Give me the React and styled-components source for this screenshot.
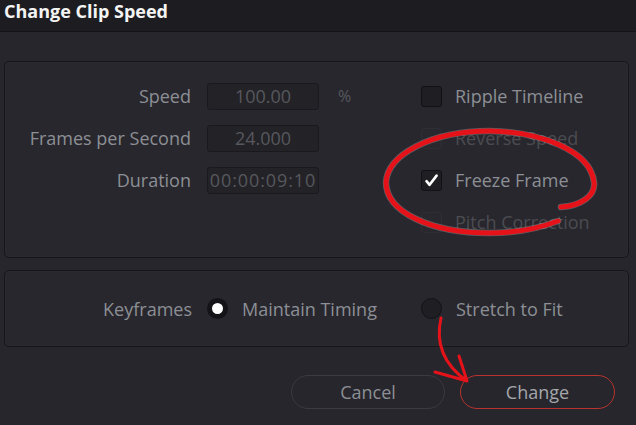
import styled, { createGlobalStyle } from "styled-components";

const GlobalStyle = createGlobalStyle`
  html, body {
    margin: 0;
    padding: 0;
    background: #27262c;
  }

  body {
    font-family: "Open Sans", "Noto Sans", sans-serif;
  }
`;

const StyledDialog = styled.div`
  position: relative;
  width: 636px;
  height: 425px;
  overflow: hidden;

  display: flex;
  flex-direction: column;

  background-color: #27262c;
`;

const StyledTitleBar = styled.div`
  height: 31px;
  padding-left: 4px;

  border-bottom: 1px solid #141317;
  background-color: #1d1c21;

  color: #f4f4f4;
  font-size: 18px;
  font-weight: 700;
  line-height: 23px;
`;

const StyledBody = styled.div`
  padding: 29px 7px 0 4px;

  display: flex;
  flex-direction: column;
  gap: 12px;
`;

const StyledPanel = styled.div`
  height: ${({ $height }) => $height}px;
  box-sizing: border-box;

  display: flex;
  align-items: ${({ $center }) => ($center ? "center" : "flex-start")};

  border: 1px solid #161519;
  border-radius: 5px;
  background-color: #28272d;
  box-shadow: inset 0 0 0 1px #2b2a30;
`;

const StyledFields = styled.div`
  padding-top: 13px;
  width: 416px;

  display: grid;
  grid-template-columns: 186px 112px auto;
  grid-auto-rows: 42px;
  column-gap: 16px;
  align-items: center;
`;

const StyledLabel = styled.div`
  text-align: right;

  color: #8c8f95;
  font-size: 18px;
  white-space: nowrap;
`;

const StyledInput = styled.div`
  height: 27px;
  box-sizing: border-box;
  overflow: hidden;

  display: flex;
  align-items: center;
  justify-content: center;

  border: 1px solid #1a191d;
  border-radius: 3px;
  background-color: #232227;

  color: #56585d;
  font-size: 18px;
  letter-spacing: ${({ $wide }) => ($wide ? "0.9px" : "0")};
`;

const StyledUnit = styled.div`
  padding-left: 3px;

  color: #56585d;
  font-size: 16px;
`;

const StyledOptions = styled.div`
  padding-top: 13px;

  display: grid;
  grid-auto-rows: 42px;
  align-items: center;
`;

const StyledOption = styled.div`
  display: flex;
  align-items: center;
  gap: 13px;

  color: ${({ $disabled }) => ($disabled ? "#4b4c51" : "#8c8f95")};
  font-size: 18px;
  white-space: nowrap;
`;

const StyledCheckbox = styled.div`
  width: 21px;
  height: 21px;
  box-sizing: border-box;

  display: flex;
  align-items: center;
  justify-content: center;

  border: 1px solid ${({ $disabled }) => ($disabled ? "#2f2e34" : "#121115")};
  border-radius: 3px;
  background-color: ${({ $disabled }) => ($disabled ? "#29282e" : "#1f1e22")};
`;

const StyledKeyframes = styled.div`
  width: 100%;

  display: flex;
  align-items: center;
`;

const StyledKeyLabel = styled(StyledLabel)`
  width: 187px;
  margin-right: 15px;
`;

const StyledRadioOption = styled.div`
  width: ${({ $width }) => $width}px;

  display: flex;
  align-items: center;
  gap: 14px;

  color: #8c8f95;
  font-size: 18px;
  white-space: nowrap;
`;

const StyledRadio = styled.div`
  width: 21px;
  height: 21px;
  box-sizing: border-box;
  flex-shrink: 0;

  border: ${({ $checked }) => ($checked ? "5px solid #141317" : "1px solid #121115")};
  border-radius: 50%;
  background-color: ${({ $checked }) => ($checked ? "#ffffff" : "#1f1e22")};
`;

const StyledButtons = styled.div`
  margin-top: 16px;
  padding-right: 14px;

  display: flex;
  justify-content: flex-end;
  gap: 15px;
`;

const StyledButton = styled.div`
  width: ${({ $primary }) => ($primary ? 155 : 154)}px;
  height: 34px;
  box-sizing: border-box;

  display: flex;
  align-items: center;
  justify-content: center;

  border: 1.5px solid ${({ $primary }) => ($primary ? "#b9332f" : "#3a3a40")};
  border-radius: 17px;

  color: ${({ $primary }) => ($primary ? "#a4a7ac" : "#8c8f95")};
  font-size: 18px;
`;

const StyledMarks = styled.svg`
  position: absolute;
  inset: 0;
  pointer-events: none;
`;

const fields = [
  { label: "Speed", value: "100.00", unit: "%" },
  { label: "Frames per Second", value: "24.000" },
  { label: "Duration", value: "00:00:09:10", wide: true },
];

const options = [
  { label: "Ripple Timeline" },
  { label: "Reverse Speed", disabled: true },
  { label: "Freeze Frame", checked: true },
  { label: "Pitch Correction", disabled: true },
];

const circlePath =
  "M561 207 C580 206 596 196 594 182 C590 150 540 132 490 131 C430 131 388 155 386 182 C386 212 430 233 490 233 C520 233 545 226 558 221";

const Check = () => (
  <svg width="15" height="15" viewBox="0 0 15 15">
    <path
      d="M2.5 8.2 L5.6 11.8 L12.6 2.6"
      fill="none"
      stroke="#ffffff"
      strokeWidth="2.6"
      strokeLinecap="round"
      strokeLinejoin="round"
    />
  </svg>
);

const App = () => (
  <StyledDialog>
    <GlobalStyle />
    <StyledTitleBar>Change Clip Speed</StyledTitleBar>

    <StyledBody>
      <StyledPanel $height={197}>
        <StyledFields>
          {fields.map((field) => [
            <StyledLabel key={`${field.label}-label`}>{field.label}</StyledLabel>,
            <StyledInput key={`${field.label}-input`} $wide={field.wide}>
              {field.value}
            </StyledInput>,
            <StyledUnit key={`${field.label}-unit`}>{field.unit}</StyledUnit>,
          ])}
        </StyledFields>

        <StyledOptions>
          {options.map((option) => (
            <StyledOption key={option.label} $disabled={option.disabled}>
              <StyledCheckbox $disabled={option.disabled}>
                {option.checked && <Check />}
              </StyledCheckbox>
              {option.label}
            </StyledOption>
          ))}
        </StyledOptions>
      </StyledPanel>

      <StyledPanel $height={77} $center>
        <StyledKeyframes>
          <StyledKeyLabel>Keyframes</StyledKeyLabel>
          <StyledRadioOption $width={214}>
            <StyledRadio $checked />
            Maintain Timing
          </StyledRadioOption>
          <StyledRadioOption>
            <StyledRadio />
            Stretch to Fit
          </StyledRadioOption>
        </StyledKeyframes>
      </StyledPanel>

      <StyledButtons>
        <StyledButton>Cancel</StyledButton>
        <StyledButton $primary>Change</StyledButton>
      </StyledButtons>
    </StyledBody>

    <StyledMarks width="636" height="425" viewBox="0 0 636 425">
      <g fill="none" strokeLinecap="round" strokeLinejoin="round">
        <path d={circlePath} stroke="rgba(255,255,255,0.25)" strokeWidth="6.5" />
        <path d={circlePath} stroke="#e5121a" strokeWidth="5" />
        <path
          d="M441 318 C436 340 440 362 467 381 M459 356 L467 381 L435 372"
          stroke="#e5121a"
          strokeWidth="3"
        />
      </g>
    </StyledMarks>
  </StyledDialog>
);

export default App;
